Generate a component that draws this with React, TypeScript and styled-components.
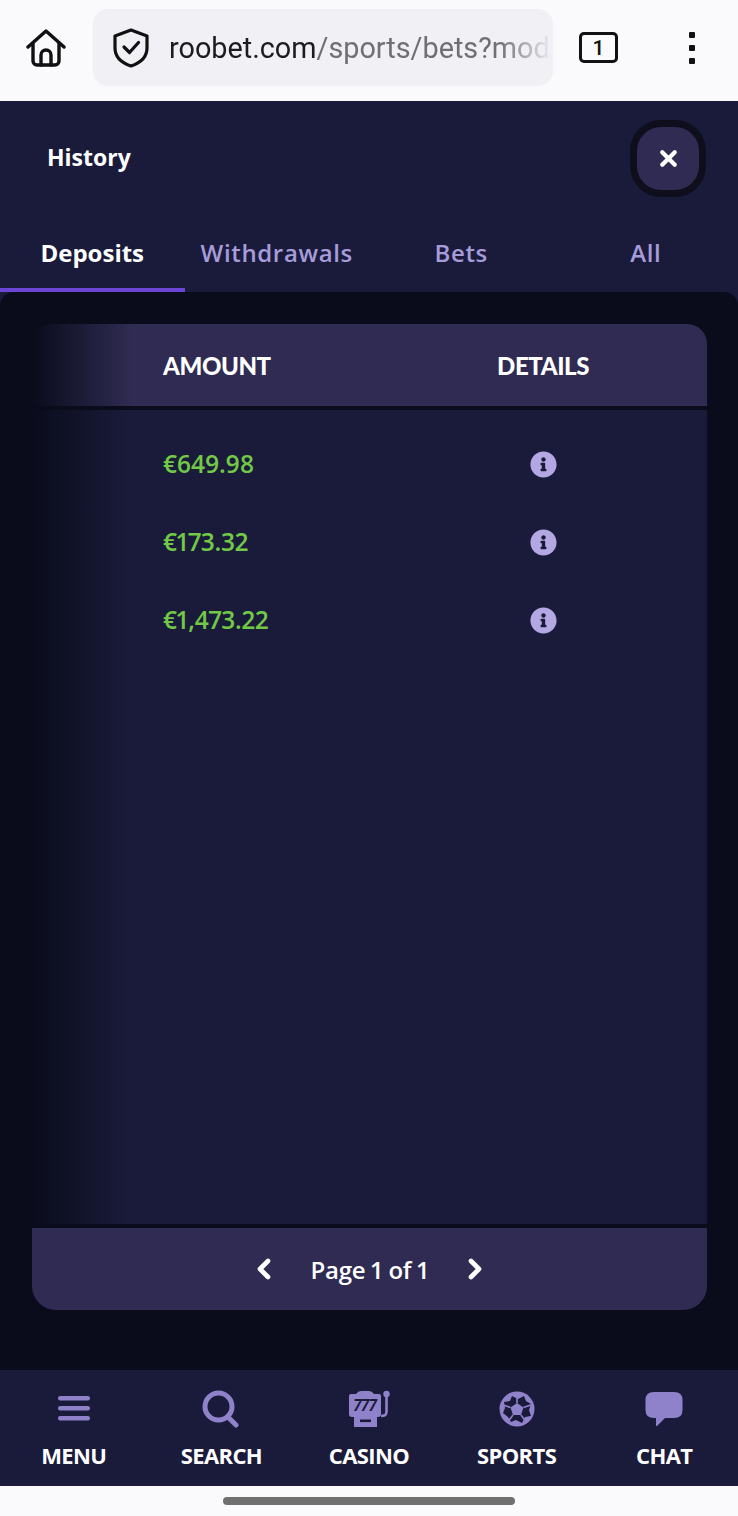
import React from "react";
import styled, { createGlobalStyle } from "styled-components";
import { FaInfoCircle } from "react-icons/fa";
import { ChevronLeft, ChevronRight, X } from "lucide-react";

const Global = createGlobalStyle`
  html, body { margin: 0; padding: 0; background: #fafafc; }
  * { box-sizing: border-box; }
`;

const Page = styled.div`
  width: 738px;
  height: 1516px;
  display: flex;
  flex-direction: column;
  overflow: hidden;
  font-family: "Open Sans", "Noto Sans", sans-serif;
  font-variant-numeric: proportional-nums;
`;

const BrowserBar = styled.header`
  height: 101px;
  flex: none;
  background: #fafafc;
  display: flex;
  align-items: center;
  padding: 0 0 6px 26px;
`;

const UrlPill = styled.div`
  width: 460px;
  height: 77px;
  margin-left: 27px;
  border-radius: 15px;
  background: #f0f0f5;
  display: flex;
  align-items: center;
  padding-left: 20px;
  gap: 20px;
`;

const UrlText = styled.div`
  flex: 1;
  overflow: hidden;
  white-space: nowrap;
  font: 400 28.8px "Roboto", sans-serif;
  color: #6f6f75;
  mask-image: linear-gradient(to right, #000 86%, transparent 100%);
`;

const UrlHost = styled.span`
  color: #1c1c20;
`;

const TabCount = styled.div`
  width: 39px;
  height: 31px;
  margin-left: 26px;
  border: 3px solid #111;
  border-radius: 5px;
  display: flex;
  align-items: center;
  justify-content: center;
  font: 500 21px "Roboto", sans-serif;
  color: #111;
`;

const Kebab = styled.div`
  margin-left: 71px;
  display: flex;
  flex-direction: column;
  gap: 7px;
`;

const KebabDot = styled.span`
  width: 6px;
  height: 6px;
  border-radius: 1px;
  background: #111;
`;

const ModalHead = styled.section`
  height: 191px;
  flex: none;
  background: #1a1b3a;
  display: flex;
  flex-direction: column;
`;

const TitleRow = styled.div`
  height: 114px;
  display: flex;
  align-items: center;
  justify-content: space-between;
  padding: 0 32px 0 47px;
`;

const Title = styled.h1`
  margin: 0 0 3px;
  font-size: 23px;
  font-weight: 700;
  color: #fff;
`;

const CloseButton = styled.button`
  width: 76px;
  height: 77px;
  border: 7px solid #0e0e1c;
  border-radius: 31px;
  background: #2f2b52;
  color: #fff;
  display: flex;
  align-items: center;
  justify-content: center;
  padding: 0;
`;

const Tabs = styled.nav`
  flex: 1;
  display: grid;
  grid-template-columns: repeat(4, 1fr);
`;

const Tab = styled.div<{ $active?: boolean }>`
  display: flex;
  align-items: center;
  justify-content: center;
  padding-top: 2px;
  font-size: 24px;
  font-weight: ${(p) => (p.$active ? 700 : 600)};
  letter-spacing: ${(p) => (p.$active ? "0" : "0.65px")};
  color: ${(p) => (p.$active ? "#fff" : "#a79cdb")};
  border-bottom: 4px solid ${(p) => (p.$active ? "#6b46d6" : "transparent")};
`;

const Body = styled.main`
  height: 1078px;
  flex: none;
  background: #1a1b3a;
`;

const BodyInner = styled.div`
  height: 100%;
  background: #0a0c1c;
  border-radius: 14px 14px 0 0;
  padding: 32px 31px 60px 32px;
  display: flex;
  flex-direction: column;
`;

const Listing = styled.div`
  flex: 1;
  position: relative;
  display: flex;
  flex-direction: column;
`;

const columns = `grid-template-columns: 131px 216px 1fr;`;

const HeadRow = styled.div`
  height: 82px;
  flex: none;
  display: grid;
  ${columns}
  align-items: center;
  background: #2f2b52;
  border-radius: 20px 20px 0 0;
  font-family: "Lato", sans-serif;
  font-size: 24px;
  font-weight: 900;
  letter-spacing: -0.4px;
  color: #fff;
`;

const Rows = styled.div`
  flex: 1;
  margin-top: 4px;
  padding-top: 15px;
  background: #1a1b3a;
`;

const Row = styled.div`
  height: 78px;
  display: grid;
  ${columns}
  align-items: center;
`;

const Amount = styled.div`
  grid-column: 2;
  padding-bottom: 2px;
  font-size: 24.5px;
  font-weight: 600;
  letter-spacing: -0.2px;
  color: #72c945;
`;

const HeadAmount = styled.div`
  grid-column: 2;
`;

const DetailCell = styled.div<{ $head?: boolean }>`
  grid-column: 3;
  display: flex;
  justify-content: center;
  color: ${(p) => (p.$head ? "#fff" : "#b4a8e4")};
`;

const FadeOverlay = styled.div`
  position: absolute;
  left: 0;
  top: 0;
  bottom: 0;
  width: 100px;
  pointer-events: none;
  background: linear-gradient(to right, #0a0c1c 0%, rgba(10, 12, 28, 0) 100%);
`;

const Pager = styled.div`
  height: 82px;
  flex: none;
  margin-top: 4px;
  background: #2f2b52;
  border-radius: 0 0 24px 24px;
  display: flex;
  align-items: center;
  justify-content: center;
  gap: 31px;
  color: #fff;
  font-size: 24px;
  font-weight: 600;
`;

const PagerText = styled.span`
  letter-spacing: -0.25px;
`;

const BottomNav = styled.nav`
  height: 116px;
  flex: none;
  background: #1a1b3a;
  display: grid;
  grid-template-columns: repeat(5, 147.6px);
`;

const NavItem = styled.div`
  display: flex;
  flex-direction: column;
  align-items: center;
  padding-top: 17px;
`;

const NavIcon = styled.div`
  height: 44px;
  display: flex;
  align-items: center;
  justify-content: center;
  color: #8f82ca;
`;

const NavLabel = styled.span`
  margin-top: 9px;
  font-size: 22px;
  font-weight: 700;
  letter-spacing: -0.6px;
  color: #fff;
`;

const GestureArea = styled.footer`
  flex: 1;
  background: #fafafc;
  display: flex;
  justify-content: center;
  padding-top: 11px;
`;

const GestureBar = styled.div`
  width: 292px;
  height: 8px;
  border-radius: 4px;
  background: #707070;
`;

const HomeIcon = () => (
  <svg width="40" height="38" viewBox="0 0 40 38" fill="none" stroke="#111" strokeWidth="3.4" strokeLinejoin="round" strokeLinecap="round">
    <path d="M2 18 L20 2 L38 18" />
    <path d="M7 14 V32 a4 4 0 0 0 4 4 H29 a4 4 0 0 0 4 -4 V14" />
    <path d="M15 36 V26 a5 5 0 0 1 10 0 V36" />
  </svg>
);

const ShieldIcon = () => (
  <svg width="36" height="40" viewBox="0 0 36 40" fill="none" stroke="#111" strokeWidth="3.2" strokeLinejoin="round" strokeLinecap="round">
    <path d="M18 2 L34 8 V20 C34 29 27 35 18 38 C9 35 2 29 2 20 V8 Z" />
    <path d="M11 19 L16.5 24.5 L25.5 14.5" />
  </svg>
);

const MenuIcon = () => (
  <svg width="34" height="26" viewBox="0 0 34 26" fill="currentColor">
    <rect x="1" y="0" width="32" height="4.5" rx="2.2" />
    <rect x="1" y="10" width="32" height="4.5" rx="2.2" />
    <rect x="1" y="20" width="32" height="4.5" rx="2.2" />
  </svg>
);

const SearchIcon = () => (
  <svg width="38" height="38" viewBox="0 0 38 38" fill="none" stroke="currentColor" strokeLinecap="round">
    <circle cx="16.5" cy="16.5" r="13.5" strokeWidth="5" />
    <path d="M27 28 L34 35" strokeWidth="5" />
  </svg>
);

const SlotIcon = () => (
  <svg width="42" height="38" viewBox="0 0 42 38">
    <path fill="currentColor" d="M1 6 Q1 4 3 4 H8 Q10 1 13 1 H21 Q24 1 26 4 H31 Q33 4 33 6 V24 Q33 27 30 27 H29 V37 H6 V27 H4 Q1 27 1 24 Z" />
    <text x="17" y="20.5" textAnchor="middle" fontFamily="Lato, sans-serif" fontStyle="italic" fontWeight="900" fontSize="16" letterSpacing="-0.3" fill="#1a1b3a">777</text>
    <rect x="12" y="29.5" width="11" height="2.6" fill="#1a1b3a" />
    <circle cx="38.5" cy="4" r="3.2" fill="currentColor" />
    <path d="M38.5 5 V22 Q38.5 26 33 26" fill="none" stroke="currentColor" strokeWidth="2.6" />
  </svg>
);

const BallIcon = () => (
  <svg width="36" height="36" viewBox="0 0 36 36">
    <circle cx="18" cy="18" r="17.5" fill="currentColor" />
    <path fill="#1a1b3a" d="M13 5 L19 8 L25 5 L27 10 L32 13 L30 19 L32 25 L26 26 L23 32 L17 29 L12 31 L9 26 L4 22 L6 17 L5 11 L11 10 Z" />
    <path fill="currentColor" d="M18 12 L24.5 16.5 L22 24 L14 24 L11.5 16.5 Z" />
    <path fill="none" stroke="currentColor" strokeWidth="1.6" d="M18 12 V3 M24.5 16.5 L33 13.5 M22 24 L28 32 M14 24 L8 32 M11.5 16.5 L3 13.5" />
  </svg>
);

const ChatIcon = () => (
  <svg width="38" height="36" viewBox="0 0 38 36" fill="currentColor">
    <path d="M9 1 H29 Q37.5 1 37.5 9 V19 Q37.5 27 29 27 H20 L12 35 Q11 35.5 11 34 V27 H9 Q0.5 27 0.5 19 V9 Q0.5 1 9 1 Z" />
  </svg>
);

const rows = ["€649.98", "€173.32", "€1,473.22"];
const tabs = ["Deposits", "Withdrawals", "Bets", "All"];
const nav = [
  { label: "MENU", icon: <MenuIcon /> },
  { label: "SEARCH", icon: <SearchIcon /> },
  { label: "CASINO", icon: <SlotIcon /> },
  { label: "SPORTS", icon: <BallIcon /> },
  { label: "CHAT", icon: <ChatIcon /> },
];

export default function App() {
  return (
    <Page>
      <Global />
      <BrowserBar>
        <HomeIcon />
        <UrlPill>
          <ShieldIcon />
          <UrlText>
            <UrlHost>roobet.com</UrlHost>/sports/bets?mod
          </UrlText>
        </UrlPill>
        <TabCount>1</TabCount>
        <Kebab>
          <KebabDot />
          <KebabDot />
          <KebabDot />
        </Kebab>
      </BrowserBar>
      <ModalHead>
        <TitleRow>
          <Title>History</Title>
          <CloseButton aria-label="Close">
            <X size={25} strokeWidth={4} />
          </CloseButton>
        </TitleRow>
        <Tabs>
          {tabs.map((t, i) => (
            <Tab key={t} $active={i === 0}>
              {t}
            </Tab>
          ))}
        </Tabs>
      </ModalHead>
      <Body>
        <BodyInner>
          <Listing>
            <HeadRow>
              <HeadAmount>AMOUNT</HeadAmount>
              <DetailCell $head>DETAILS</DetailCell>
            </HeadRow>
            <Rows>
              {rows.map((r) => (
                <Row key={r}>
                  <Amount>{r}</Amount>
                  <DetailCell>
                    <FaInfoCircle size={27} />
                  </DetailCell>
                </Row>
              ))}
            </Rows>
            <FadeOverlay />
          </Listing>
          <Pager>
            <ChevronLeft size={32} strokeWidth={3.5} />
            <PagerText>Page 1 of 1</PagerText>
            <ChevronRight size={32} strokeWidth={3.5} />
          </Pager>
        </BodyInner>
      </Body>
      <BottomNav>
        {nav.map((n) => (
          <NavItem key={n.label}>
            <NavIcon>{n.icon}</NavIcon>
            <NavLabel>{n.label}</NavLabel>
          </NavItem>
        ))}
      </BottomNav>
      <GestureArea>
        <GestureBar />
      </GestureArea>
    </Page>
  );
}
